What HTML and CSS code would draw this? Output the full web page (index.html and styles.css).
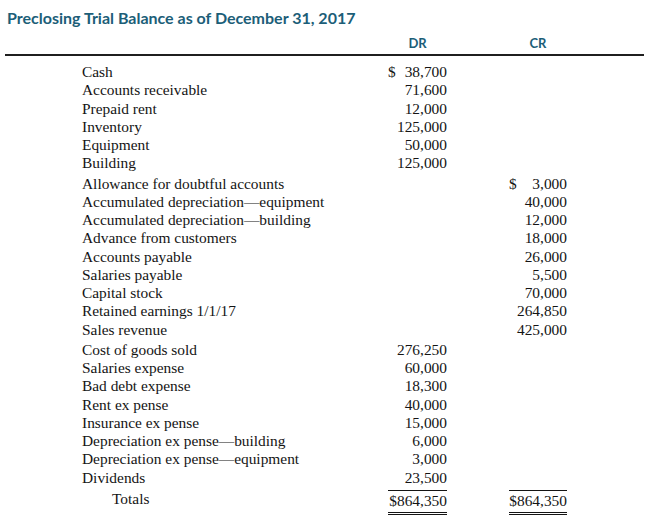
FILE: index.html
```html
<!DOCTYPE html>
<html>
<head>
<meta charset="utf-8">
<link rel="stylesheet" href="styles.css">
</head>
<body>
<div class="page">
  <h1 class="title">Preclosing Trial Balance as of December 31, 2017</h1>
  <div class="head">
    <span class="spacer"></span>
    <span class="colhead dr">DR</span>
    <span class="colhead cr">CR</span>
  </div>
  <div class="rows">
    <div class="group">
      <div class="row"><span class="label">Cash</span><span class="amt dr"><span>$</span><span>38,700</span></span><span class="amt cr"></span></div>
      <div class="row"><span class="label">Accounts receivable</span><span class="amt dr"><span></span><span>71,600</span></span><span class="amt cr"></span></div>
      <div class="row"><span class="label">Prepaid rent</span><span class="amt dr"><span></span><span>12,000</span></span><span class="amt cr"></span></div>
      <div class="row"><span class="label">Inventory</span><span class="amt dr"><span></span><span>125,000</span></span><span class="amt cr"></span></div>
      <div class="row"><span class="label">Equipment</span><span class="amt dr"><span></span><span>50,000</span></span><span class="amt cr"></span></div>
      <div class="row"><span class="label">Building</span><span class="amt dr"><span></span><span>125,000</span></span><span class="amt cr"></span></div>
    </div>
    <div class="group">
      <div class="row"><span class="label">Allowance for doubtful accounts</span><span class="amt dr"></span><span class="amt cr"><span>$</span><span>3,000</span></span></div>
      <div class="row"><span class="label">Accumulated depreciation—equipment</span><span class="amt dr"></span><span class="amt cr"><span></span><span>40,000</span></span></div>
      <div class="row"><span class="label">Accumulated depreciation—building</span><span class="amt dr"></span><span class="amt cr"><span></span><span>12,000</span></span></div>
      <div class="row"><span class="label">Advance from customers</span><span class="amt dr"></span><span class="amt cr"><span></span><span>18,000</span></span></div>
      <div class="row"><span class="label">Accounts payable</span><span class="amt dr"></span><span class="amt cr"><span></span><span>26,000</span></span></div>
      <div class="row"><span class="label">Salaries payable</span><span class="amt dr"></span><span class="amt cr"><span></span><span>5,500</span></span></div>
      <div class="row"><span class="label">Capital stock</span><span class="amt dr"></span><span class="amt cr"><span></span><span>70,000</span></span></div>
      <div class="row"><span class="label">Retained earnings 1/1/17</span><span class="amt dr"></span><span class="amt cr"><span></span><span>264,850</span></span></div>
      <div class="row"><span class="label">Sales revenue</span><span class="amt dr"></span><span class="amt cr"><span></span><span>425,000</span></span></div>
    </div>
    <div class="group">
      <div class="row"><span class="label">Cost of goods sold</span><span class="amt dr"><span></span><span>276,250</span></span><span class="amt cr"></span></div>
      <div class="row"><span class="label">Salaries expense</span><span class="amt dr"><span></span><span>60,000</span></span><span class="amt cr"></span></div>
      <div class="row"><span class="label">Bad debt expense</span><span class="amt dr"><span></span><span>18,300</span></span><span class="amt cr"></span></div>
      <div class="row"><span class="label">Rent ex pense</span><span class="amt dr"><span></span><span>40,000</span></span><span class="amt cr"></span></div>
      <div class="row"><span class="label">Insurance ex pense</span><span class="amt dr"><span></span><span>15,000</span></span><span class="amt cr"></span></div>
      <div class="row"><span class="label">Depreciation ex pense—building</span><span class="amt dr"><span></span><span>6,000</span></span><span class="amt cr"></span></div>
      <div class="row"><span class="label">Depreciation ex pense—equipment</span><span class="amt dr"><span></span><span>3,000</span></span><span class="amt cr"></span></div>
      <div class="row"><span class="label">Dividends</span><span class="amt dr"><span></span><span>23,500</span></span><span class="amt cr"></span></div>
    </div>
    <div class="row total"><span class="label indent">Totals</span><span class="amt dr tot"><span>$864,350</span></span><span class="amt cr tot"><span>$864,350</span></span></div>
  </div>
</div>
</body>
</html>
```

FILE: styles.css
```css
html, body {
  margin: 0;
  padding: 0;
  background: #ffffff;
}

.page {
  width: 652px;
  height: 526px;
  padding: 0 8px 0 5px;
  box-sizing: border-box;
  overflow: hidden;
}

.title {
  margin: 0;
  padding: 9px 0 0 2px;
  font-family: "Lato", "Liberation Sans", sans-serif;
  font-weight: 700;
  font-size: 16px;
  line-height: 18px;
  color: #1c5e78;
}

.head {
  display: flex;
  margin-top: 8px;
  padding-bottom: 3px;
  border-bottom: 2px solid #1f1f1f;
  font-family: "Lato", "Liberation Sans", sans-serif;
  font-weight: 700;
  font-size: 13px;
  line-height: 16px;
  color: #1c5e78;
}

.spacer {
  flex: none;
  width: 383px;
}

.colhead {
  text-align: center;
}

.dr {
  flex: none;
  width: 59px;
}

.cr {
  flex: none;
  width: 58px;
  margin-left: 62px;
}

.rows {
  padding: 7px 0 0 0;
  font-family: "Liberation Serif", "Times New Roman", serif;
  font-size: 15.4px;
  color: #141414;
}

.group + .group {
  margin-top: 2px;
}

.row {
  display: flex;
  padding-left: 77px;
  height: 18.25px;
  line-height: 18px;
  white-space: nowrap;
}

.label {
  flex: none;
  width: 306px;
  box-sizing: border-box;
}

.amt {
  display: flex;
  justify-content: space-between;
}

.total {
  margin-top: 3px;
  height: auto;
}

.indent {
  padding-left: 30px;
}

.tot {
  justify-content: flex-end;
  border-top: 1px solid #141414;
  border-bottom: 3px double #141414;
  padding: 1px 0 2px;
}
```
